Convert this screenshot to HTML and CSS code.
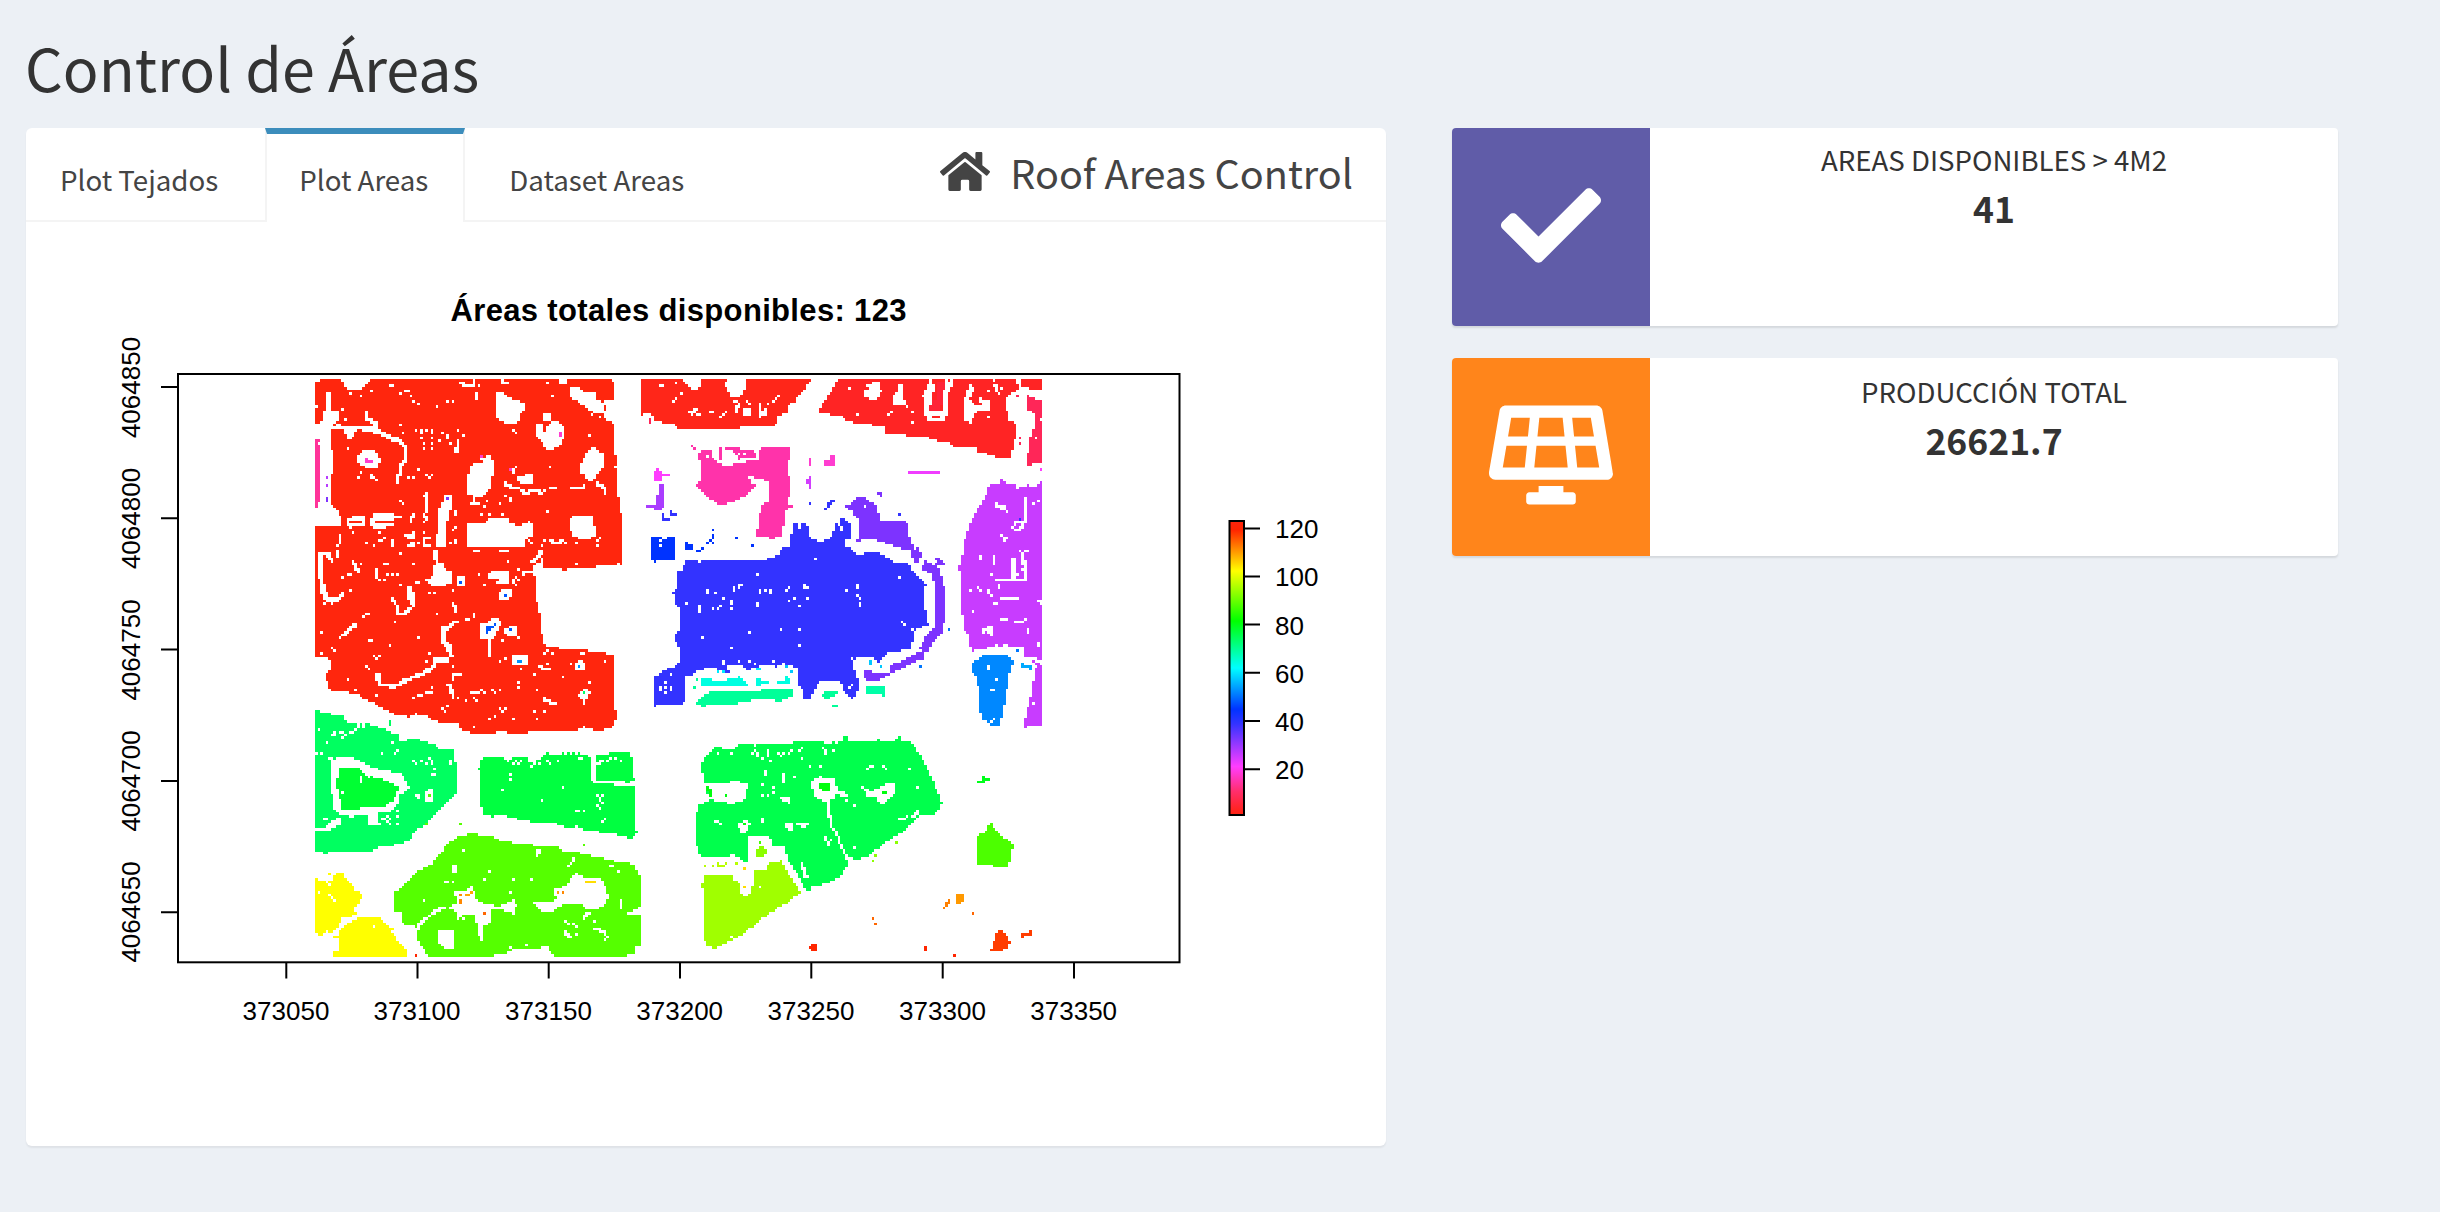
FILE: index.html
```html
<!DOCTYPE html>
<html lang="es">
<head>
<meta charset="utf-8">
<title>Control de Áreas</title>
<link rel="stylesheet" href="styles.css">
</head>
<body>
<h1 class="page-title">Control de Áreas</h1>
<main class="row">
  <section class="tab-box">
    <header class="tab-header">
      <nav class="tabs">
        <a class="tab">Plot Tejados</a>
        <a class="tab tab-active">Plot Areas</a>
        <a class="tab">Dataset Areas</a>
      </nav>
      <div class="box-title">
        <svg class="home-icon" viewBox="0 31 576 450"><path fill="currentColor" d="M280.37 148.26L96 300.11V464a16 16 0 0 0 16 16l112.06-.29a16 16 0 0 0 15.92-16V368a16 16 0 0 1 16-16h64a16 16 0 0 1 16 16v95.64a16 16 0 0 0 16 16.05L464 480a16 16 0 0 0 16-16V300L295.67 148.26a12.19 12.19 0 0 0-15.3 0zM571.6 251.47L488 182.56V44.05a12 12 0 0 0-12-12h-56a12 12 0 0 0-12 12v72.61L318.47 43a48 48 0 0 0-61 0L4.34 251.47a12 12 0 0 0-1.6 16.9l25.5 31A12 12 0 0 0 45.15 301l235.22-193.74a12.19 12.19 0 0 1 15.3 0L530.9 301a12 12 0 0 0 16.9-1.6l25.5-31a12 12 0 0 0-1.7-16.93z"/></svg>
        <span>Roof Areas Control</span>
      </div>
    </header>
    <div class="tab-content">
      <svg class="plot" viewBox="46 242 1320 880">
        <defs>
          <linearGradient id="rainbow" x1="0" y1="1" x2="0" y2="0">
            <stop offset="0" stop-color="#ff2412"/><stop offset=".02" stop-color="#ff2424"/>
            <stop offset=".08" stop-color="#ff2e6b"/><stop offset=".165" stop-color="#ff3dff"/>
            <stop offset=".31" stop-color="#3333ff"/><stop offset=".36" stop-color="#0033ff"/>
            <stop offset=".5" stop-color="#00ffff"/><stop offset=".66" stop-color="#00ff00"/>
            <stop offset=".83" stop-color="#ffff00"/><stop offset=".97" stop-color="#ff2400"/>
            <stop offset="1" stop-color="#ff240d"/>
          </linearGradient>
        </defs>
        <text class="plot-title" x="678.5" y="321" textLength="456">Áreas totales disponibles: 123</text>
        <g id="raster" shape-rendering="crispEdges" transform="translate(315 379) scale(2.626)"></g>
        <rect class="axis" x="178" y="374" width="1001.5" height="588.3"/>
        <path class="axis" d="M178 387h-17M178 518.3h-17M178 649.5h-17M178 781h-17M178 912.3h-17M286.3 962v16.5M417.5 962v16.5M548.7 962v16.5M680 962v16.5M811.3 962v16.5M942.7 962v16.5M1074 962v16.5"/>
        <g class="tick-label">
          <text x="286" y="1020">373050</text><text x="417" y="1020">373100</text><text x="548.5" y="1020">373150</text>
          <text x="679.7" y="1020">373200</text><text x="811" y="1020">373250</text><text x="942.5" y="1020">373300</text><text x="1073.7" y="1020">373350</text>
          <text transform="translate(139.5 387.5) rotate(-90)">4064850</text>
          <text transform="translate(139.5 518.5) rotate(-90)">4064800</text>
          <text transform="translate(139.5 650) rotate(-90)">4064750</text>
          <text transform="translate(139.5 781) rotate(-90)">4064700</text>
          <text transform="translate(139.5 912) rotate(-90)">4064650</text>
        </g>
        <rect class="axis legend-bar" x="1229.5" y="521" width="14.5" height="294"/>
        <path class="axis" d="M1244 528.4h16M1244 576.4h16M1244 624.6h16M1244 672.8h16M1244 721h16M1244 769.2h16"/>
        <g class="legend-label">
          <text x="1275" y="538">120</text><text x="1275" y="586">100</text><text x="1275" y="634.5">80</text>
          <text x="1275" y="682.5">60</text><text x="1275" y="730.7">40</text><text x="1275" y="779">20</text>
        </g>
      </svg>
    </div>
  </section>
  <aside class="info-column">
    <div class="info-box">
      <div class="info-icon purple"><svg class="check-icon" viewBox="0 65 512 382"><path fill="currentColor" d="M173.898 439.404l-166.4-166.4c-9.997-9.997-9.997-26.206 0-36.204l36.203-36.204c9.997-9.998 26.207-9.998 36.204 0L192 312.69 432.095 72.596c9.997-9.997 26.207-9.997 36.204 0l36.203 36.204c9.997 9.997 9.997 26.206 0 36.204l-294.4 294.401c-9.998 9.997-26.207 9.997-36.204-.001z"/></svg></div>
      <div class="info-content"><span class="info-text">Areas disponibles &gt; 4m2</span><strong class="info-number">41</strong></div>
    </div>
    <div class="info-box">
      <div class="info-icon orange"><svg class="solar-icon" viewBox="0 0 640 512"><path fill="currentColor" d="M431.98 448.01l-47.97.05V416h-128v32.21l-47.98.05c-8.82.01-15.97 7.16-15.98 15.99l-.05 31.73c-.01 8.85 7.17 16.03 16.02 16.02l223.96-.26c8.82-.01 15.97-7.16 15.98-15.98l.04-31.73c.01-8.85-7.17-16.03-16.02-16.02zM585.2 26.74C582.58 11.31 568.99 0 553.06 0H86.93C71 0 57.41 11.31 54.79 26.74-3.32 369.16.04 348.08.03 352c-.03 17.32 14.29 32 32.6 32h574.74c18.23 0 32.51-14.56 32.59-31.79.02-4.08 3.35 16.95-54.76-325.47zM259.83 64h120.33l9.77 96H250.06l9.77-96zm-75.17 256H71.09L90.1 208h105.97l-11.41 112zm16.29-160H98.24l16.29-96h96.19l-9.77 96zm32.82 160l11.4-112h149.65l11.4 112H233.77zm195.5-256h96.19l16.29 96H439.04l-9.77-96zm26.06 256l-11.4-112H549.9l19.01 112H455.33z"/></svg></div>
      <div class="info-content accented"><span class="info-text">Producción total</span><strong class="info-number">26621.7</strong></div>
    </div>
  </aside>
</main>
<script src="raster.js"></script>
</body>
</html>
```
FILE: styles.css
```css
* { box-sizing: border-box; }
body {
  margin: 0;
  height: 1212px;
  padding: 34px 26px 0;
  background: #ecf0f5;
  color: #333;
  font-family: "Noto Sans CJK SC", "Noto Sans", sans-serif;
  overflow: hidden;
}
.page-title { margin: 0 0 30px -1px; font-size: 59.2px; line-height: 64px; font-weight: 400; }
.row { display: flex; align-items: flex-start; gap: 66px; }
.tab-box {
  width: 1360px;
  height: 1018px;
  background: #fff;
  border-radius: 6px;
  box-shadow: 0 2px 2px rgba(0, 0, 0, .06);
}
.tab-header {
  display: flex;
  justify-content: space-between;
  height: 94px;
  border-bottom: 2px solid #f4f4f4;
  color: #444;
}
.tabs { display: flex; gap: 10px; height: 94px; }
.tab {
  padding: 25px 35px 0 32px;
  border-top: 6px solid transparent;
  border-left: 2px solid transparent;
  border-right: 2px solid transparent;
  font-size: 27.7px;
  line-height: 40px;
  white-space: nowrap;
}
.tab-active {
  border-color: #3c8dbc #f4f4f4 transparent;
  background: #fff;
}
.box-title {
  display: flex;
  align-items: center;
  gap: 20px;
  height: 88px;
  padding-right: 33px;
  font-size: 39.6px;
  line-height: 86px;
}
.home-icon { width: 50px; height: 39px; margin-top: -1px; }
.tab-content { padding: 20px; }
.plot { display: block; width: 1320px; height: 880px; font-family: "Liberation Sans", Arial, sans-serif; }
.plot-title { font-size: 31px; font-weight: 700; text-anchor: middle; fill: #000; }
.axis { fill: none; stroke: #000; stroke-width: 2; }
.legend-bar { fill: url(#rainbow); }
.tick-label, .legend-label { font-size: 26px; fill: #000; }
.tick-label { text-anchor: middle; }
.info-column { display: flex; flex-direction: column; gap: 32px; width: 886px; }
.info-box {
  display: flex;
  height: 198px;
  overflow: hidden;
  background: #fff;
  border-radius: 4px;
  box-shadow: 0 2px 2px rgba(0, 0, 0, .1);
}
.info-icon { display: flex; align-items: center; justify-content: center; width: 198px; color: #fff; }
.purple { background: #605ca8; }
.orange { background: #ff851b; }
.check-icon { width: 100px; height: 75px; margin-top: -4px; }
.solar-icon { width: 124px; height: 100px; margin-top: -4px; }
.info-content { flex: 1; display: flex; flex-direction: column; align-items: center; padding-top: 11px; }
.accented { padding-top: 13px; }
.info-text { font-size: 27.6px; line-height: 40px; text-transform: uppercase; }
.info-number { font-size: 35.5px; line-height: 58px; }
```
FILE: raster.js
```js
// Roof raster: 277 x 220 cells, each classified with the colour of its area.
const COLS = 277, ROWS = 220, CELL = 2.626;
const cells = new Array(COLS * ROWS).fill(null);
const ctx = document.createElement('canvas').getContext('2d');
let ox = 0, oy = 0;

function origin(x, y) { ox = x; oy = y; }
function parse(points) {
  return points.trim().split(/\s+/).map(p => {
    const [x, y] = p.split(',').map(Number);
    return [(ox + x / 3 - 315) / CELL, (oy + y / 3 - 379) / CELL];
  });
}
function scan(points, pad, hit, color) {
  const xs = points.map(p => p[0]), ys = points.map(p => p[1]);
  const x1 = Math.min(COLS, Math.ceil(Math.max(...xs) + pad)), y1 = Math.min(ROWS, Math.ceil(Math.max(...ys) + pad));
  for (let y = Math.max(0, Math.floor(Math.min(...ys) - pad)); y < y1; y++)
    for (let x = Math.max(0, Math.floor(Math.min(...xs) - pad)); x < x1; x++)
      if (hit(x + .5, y + .5)) cells[y * COLS + x] = color;
}
function trace(points) {
  const path = new Path2D();
  points.forEach((p, i) => i ? path.lineTo(...p) : path.moveTo(...p));
  return path;
}
function fill(color, ...shapes) {
  for (const s of shapes) {
    const pts = parse(s), path = trace(pts);
    path.closePath();
    scan(pts, 0, (x, y) => ctx.isPointInPath(path, x, y), color);
  }
}
function line(color, width, ...shapes) {
  for (const s of shapes) {
    const pts = parse(s), path = trace(pts);
    ctx.lineWidth = width / 3 / CELL;
    scan(pts, 3, (x, y) => ctx.isPointInStroke(path, x, y), color);
  }
}
function dots(color, points) {
  for (const [x, y] of parse(points)) {
    const cx = Math.floor(x), cy = Math.floor(y);
    if (cx >= 0 && cy >= 0 && cx < COLS && cy < ROWS) cells[cy * COLS + cx] = color;
  }
}

const RED = '#ff260d', W = null;

// North-west block, upper half
origin(300, 360);
fill(RED, '45,66 64,66 64,57 125,57 132,80 145,90 185,90 195,75 208,66 210,57 935,57 943,66 943,115 928,120 910,120 918,145 910,175 930,182 945,195 950,410 960,412 960,455 967,460 967,605 45,605');
fill(W,
  '40,190 68,190 68,155 80,150 76,95 90,95 92,150 115,155 115,180 105,190 92,220 92,262 100,270 100,325 92,350 92,430 118,455 125,500 100,500 75,495 40,497',
  '130,205 170,205 155,235 138,235', '170,290 185,272 222,270 242,295 230,328 205,328 175,308',
  '590,95 605,95 615,105 640,120 672,128 672,150 658,170 655,188 632,192 610,186 590,175',
  '808,82 840,82 850,92 888,100 890,118 912,130 908,158 885,160 850,135 820,118 808,110',
  '708,190 730,195 735,215 752,185 778,183 795,205 795,230 780,258 755,268 735,265 725,240 708,228', '730,160 755,160 755,182 730,182',
  '870,265 885,262 890,275 910,278 908,325 890,345 880,362 862,360 858,345 842,340 842,310 858,285',
  '512,315 530,305 550,312 548,290 575,288 580,330 570,385 545,410 525,410 505,400 505,345',
  '645,345 670,350 680,338 698,345 695,372 660,370',
  '505,492 555,490 570,474 628,474 632,492 660,496 685,484 698,488 698,530 680,535 675,570 615,572 600,565 555,578 538,590 510,575 505,560',
  '808,480 820,468 882,468 886,532 840,537 815,525',
  '212,475 225,458 280,458 282,500 225,505 212,495', '140,480 165,465 192,468 192,500 145,503',
  '425,425 455,418 450,460 440,495 435,580 425,605 405,605 405,560 412,520 412,455 425,440', '432,405 455,405 455,425 432,425');
fill(RED, '227,483 282,483 282,492 227,492', '150,484 190,484 190,492 150,492');
line(W, 14, '105,198 140,205 175,203 205,205 250,222 300,245 318,265', '780,62 802,62');
line(W, 10, '318,255 315,300 302,320 300,340 288,368', '197,150 197,178 225,185 228,212', '375,400 380,430 380,455', '475,68 500,76 524,76 524,57', '530,98 528,122', '475,240 470,275', '120,525 122,545 112,560 110,595', '277,535 277,568', '650,380 675,400 700,390 728,400', '890,270 888,290', '855,370 850,385 812,385', '890,370 915,385 917,400', '730,570 730,605', '600,62 625,72', '340,510 340,530 318,528', '320,555 345,552', '390,532 372,535 375,555 390,560', '610,370 640,385', '750,540 770,550 790,540 800,555', '510,430 540,432', '520,410 522,430', '340,462 330,490', '370,460 385,480', '50,580 60,600', '80,590 98,585');
dots(W, '268,77 277,77 214,93 151,100 183,110 300,100 317,95 325,95 330,110 340,124 356,132 411,140 444,124 460,124 537,73 130,148 136,180 145,262 49,139 65,187 300,194 312,217 348,211 364,213 364,222 364,235 380,211 395,211 395,220 395,238 372,250 372,262 395,250 395,265 427,220 443,228 443,235 420,243 451,250 475,211 490,226 640,211 648,218 758,108 740,69 868,226 748,321 356,328 325,352 340,350 380,345 388,352 396,345 175,352 183,337 215,345 215,352 223,352 232,360 300,424 309,432 545,296 640,329 648,320 640,337 740,455 765,385 748,384 758,384 615,408 632,415 630,424 562,424 553,438 600,432 545,463 568,460 608,463 466,455 466,463 283,467 292,467 300,470 372,490 466,505 458,512 466,540 466,548 450,550 370,515 160,518 199,550 222,557 237,518 237,540 246,542 253,533 317,525 356,550 300,582 685,540 692,548 732,545 725,555 830,548 900,530 892,540 892,555 924,565 945,320 877,162 900,168 735,395 325,565 310,565 160,598');
fill('#ff3399', '45,240 62,240 62,430 52,432 52,443 45,443');
dots(W, '60,249');
dots('#ff3dd0', '199,297 199,305 207,305 215,305 545,289 632,328 783,220 783,228');
dots('#b83dff', '80,352 80,376'); dots('#8033ff', '80,415 80,423 443,415');
dots(RED, '325,101');

// North-west block, lower half
origin(300, 550);
fill(RED, '45,-5 967,-5 967,45 920,45 880,52 808,52 800,62 785,62 780,54 735,54 728,25 708,30 695,70 705,85 708,155 716,158 716,188 722,190 722,250 731,255 731,283 745,290 778,295 857,302 918,306 922,315 943,318 943,475 950,480 948,505 943,528 912,540 880,540 855,530 835,533 825,543 683,543 680,551 622,551 618,543 590,543 580,551 512,551 505,543 485,540 478,520 432,518 395,512 375,495 345,490 325,502 310,495 275,490 265,480 232,470 225,457 190,448 185,438 145,428 100,425 84,410 78,375 95,350 92,330 80,318 45,323');
fill(W, '52,20 68,20 70,90 78,120 90,140 105,145 130,120 128,142 100,162 78,155 64,135 62,95 54,80', '118,265 135,260 170,230 170,215 155,222 130,245',
  '322,112 335,112 343,130 343,170 332,168 330,150 320,145', '400,45 425,35 432,55 452,62 456,95 432,108 395,108 390,98 370,95 398,75',
  '545,220 565,218 570,205 600,208 602,228 590,250 572,268 545,265', '598,122 632,118 632,140 618,153 600,145', '612,240 635,228 652,230 650,255 620,264', '635,318 683,315 682,345 660,350 640,345',
  '825,342 840,330 856,342 855,360 830,366', '835,430 855,412 870,425 860,450 840,450', '470,80 492,80 492,108 472,108', '560,70 590,60 630,65 625,100 590,98 600,82 565,82', '715,340 735,355 755,355 750,365 720,362');
line(W, 12, '232,372 240,405 285,408 320,390 370,370 400,350 405,330 445,330', '420,235 440,235 475,210', '430,240 430,280 445,285 450,315 460,320', '447,400 452,420 462,445', '408,0 410,45', '665,72 695,62', '695,40 728,0', '55,15 80,10 100,35');
line(W, 9, '570,265 570,322', '662,350 662,365', '460,155 466,188', '160,30 165,50 176,68', '110,0 110,20', '277,145 290,165 297,190 315,190 333,170', '230,55 232,85', '460,370 460,395', '460,370 480,372', '500,200 503,215', '512,430 540,425 545,418', '745,460 760,460 735,450', '385,122 388,135', '540,5 520,0', '852,450 852,462', '375,430 400,430', '600,5 630,5');
dots(W, '300,12 340,45 348,97 356,97 253,43 262,43 237,90 253,90 262,75 277,75 293,75 300,105 145,75 152,73 184,43 128,82 151,121 199,193 207,193 191,200 285,215 65,247 356,264 205,271 214,271 268,288 96,296 104,302 64,310 222,320 230,328 238,320 199,352 207,358 144,390 230,436 167,421 340,446 356,437 364,437 396,414 522,193 522,200 411,196 404,130 460,121 388,312 380,337 600,334 615,328 460,350 482,372 655,398 655,412 700,373 710,417 710,423 788,382 815,343 868,398 608,270 655,264 537,73 553,105 648,105 640,97 655,90 648,82 655,57 640,90 625,35 830,43 955,43 585,497 568,507 522,532 600,478 608,485 615,478 640,508 700,485 710,508 733,484 735,445 443,470 427,478 435,486 475,445 522,445 500,453 530,452 553,430 577,423 585,425 600,422 733,310 740,303 755,308 845,310 852,310 915,335 740,345 72,160');
dots('#0055ff', '482,97 615,138 561,232 569,232 577,232 561,240 569,240 561,248 585,223 632,240'); dots('#0090ff', '655,333 663,333 837,350'); dots('#00ff66', '852,428');

// North-centre and north-east blocks
origin(630, 360);
fill('#ff2619', '32,57 158,57 170,72 188,88 208,85 218,57 290,57 285,75 292,95 305,112 325,115 340,100 348,80 348,57 545,57 530,75 520,95 498,115 492,128 472,135 470,158 442,170 437,195 350,197 340,205 145,205 135,195 100,190 70,178 65,160 32,165');
fill('#ff2424', '622,57 1160,57 1165,88 1130,110 1128,145 1138,180 1160,190 1158,228 1150,255 1142,293 1105,293 1068,280 1040,275 1035,262 975,260 950,245 905,240 895,230 830,228 825,220 765,220 762,198 728,195 690,193 650,182 635,170 565,158 575,135 600,100', '1175,57 1237,57 1237,90 1215,92 1205,85 1175,83');
fill('#ff2658', '1190,105 1205,115 1237,122 1237,305 1208,308 1205,318 1190,315 1198,240 1208,215 1215,185 1212,158 1190,150');
fill(W, '85,72 103,72 103,80 85,80', '695,95 715,85 700,70 745,68 755,95 735,125 705,108', '788,105 805,95 805,75 820,72 820,110 832,140 790,138', '340,143 360,145 360,165 343,165', '1000,120 1020,75 1035,80 1018,115 1040,140 1080,120 1082,150 1040,155 1020,188 998,180');
line(W, 12, '905,60 888,100 886,150 900,178 935,178 948,150 950,100 968,60');
fill(W, '903,70 915,70 905,130 935,150 940,70 950,60 950,170 900,170 890,150 892,100');
fill('#ff2438', '920,68 945,68 940,95 935,130 930,152 900,150 905,125 920,115');
line(W, 9, '175,155 190,155 205,145', '310,120 325,130 318,160', '388,130 390,170 405,160 405,140', '1048,118 1080,130', '1095,75 1100,95');
dots(W, '136,65 130,124 138,115 153,100 183,162 199,163 207,160 237,158 246,158 270,170 277,163 285,155 332,200 356,130 348,124 400,155 415,134 427,124 435,115 443,108 60,165 658,85 680,165 775,163 783,155 848,155 848,187 880,108 1090,60 1072,90 1115,85 1075,175 1165,65 700,195 1105,100 940,180');
dots('#ff2658', '60,180 60,187 1168,235 1168,250 1160,108'); dots(W, '1218,234 1232,180');
const PINK = '#ff33aa', VIO = '#c83cff', PUR = '#7d33ff', BLUE = '#3333ff';
fill(PINK, '205,275 240,270 250,300 290,318 330,308 385,300 385,275 400,260 480,258 480,300 473,305 473,345 480,350 480,400 470,430 490,435 465,455 458,528 425,535 380,528 386,465 400,435 418,420 418,365 380,355 355,350 365,370 380,375 350,405 320,420 290,433 262,432 220,400 212,385 198,382 198,370 212,365 214,310 205,300');
line(PINK, 9, '183,258 200,266', '280,268 370,272 360,290', '310,270 330,300', '330,285 375,285', '275,265 270,300');
dots(W, '260,288 229,290 268,298 300,285 340,280 348,300 317,290');
fill('#ff3dd0', '595,287 615,287 615,316 585,316 585,305 598,300', '536,295 545,295 545,316 536,316');
fill('#ff3dff', '70,334 82,325 97,338 117,345 97,350 97,365 70,365'); line('#f03dff', 9, '836,337 930,337'); dots('#ff3dff', '1232,328');
fill('#aa3dff', '88,373 102,373 102,440 90,455 68,450 68,442 48,442 48,434 78,432 80,405 88,400');
fill('#d23dff', '536,350 545,350 548,375 540,385 530,365');
fill(VIO, '1080,368 1110,375 1115,358 1125,370 1160,375 1160,388 1190,375 1220,380 1237,358 1237,605 995,605 1000,550 1020,495 1042,450 1065,410');
line(BLUE, 9, '100,460 100,478 115,478', '120,458 140,465', '585,450 600,430 612,422'); dots(BLUE, '540,435 808,465');
fill(PUR, '645,440 670,425 685,412 710,412 715,425 742,435 748,480 830,485 838,530 850,560 870,605 850,605 842,570 820,568 770,552 730,538 680,543 687,530 685,480 668,455', '735,397 756,397 756,410 742,405'); dots(W, '708,436');
fill(BLUE, '430,600 450,582 480,560 482,520 490,515 490,487 520,487 535,500 535,530 568,548 605,530 612,515 615,487 625,500 635,475 648,475 660,495 660,535 645,545 655,575 680,582 725,580 740,572 780,600 780,605 430,605'); dots(W, '505,495 505,503 525,582 632,505 632,513');
fill('#0033ff', '65,532 133,532 133,598 65,598', '168,548 188,555 185,570 168,565'); dots('#0033ff', '199,572 207,570 214,566 246,512 246,526 246,535 246,548 237,545 232,548 320,535 366,558'); dots(W, '88,557 88,542 97,535 105,535');
line(W, 9, '1097,435 1120,440 1118,455', '1187,410 1187,480 1170,510 1150,510', '1185,485 1160,485 1140,510', '1110,525 1120,530 1120,542', '1180,568 1220,590'); dots(W, '1208,433 1224,425 1128,535 1130,452'); dots(BLUE, '1168,478');

// Centre and east blocks
origin(630, 550);
fill('#0033ff', '65,-5 133,-5 133,28 80,28 78,38 70,38 65,20'); dots('#0033ff', '199,3');
fill(BLUE, '455,-5 660,-5 680,14 720,14 735,5 765,18 790,35 835,38 848,65 870,88 887,105 883,150 890,215 900,225 870,232 850,245 845,300 800,303 770,312 762,325 740,338 730,318 680,325 670,335 675,365 685,395 680,435 665,450 640,425 640,402 610,390 570,395 550,425 545,450 522,450 520,425 505,400 505,355 480,345 440,350 400,345 350,362 340,345 290,350 300,368 270,365 255,350 210,360 180,377 168,378 168,455 155,465 78,465 78,473 70,473 70,378 85,378 110,355 143,347 150,318 143,275 133,270 135,250 149,240 149,175 133,160 130,128 143,110 143,65 160,55 168,32 210,35 250,27 360,27 400,30 445,15');
fill(W, '570,400 600,392 630,398 636,420 622,420 600,410 570,425 555,420', '325,105 340,102 335,112 322,118');
dots(W, '383,73 808,80 555,25 525,105 525,112 533,112 232,121 232,130 253,130 310,112 310,121 282,146 270,170 262,177 246,177 168,160 207,170 207,177 207,185 302,154 302,162 302,177 380,160 380,170 390,121 390,130 405,121 420,121 420,132 468,121 480,117 475,152 490,146 533,145 508,170 650,121 683,105 683,112 683,138 690,146 690,162 690,170 815,216 823,224 848,240 450,240 508,240 358,247 217,264 302,294 508,288 280,337 280,343 325,333 356,337 372,343 427,337 465,340 105,396 88,412 88,420 105,412 122,412 122,420 105,428 122,372 655,412 665,405 668,325');
line(PUR, 28, '850,0 865,25', '878,45 905,58', '905,45 925,90 930,130 930,200 925,240 895,270 880,305');
fill(PUR, '915,25 932,25 945,45 925,48', '885,300 885,325 840,343 790,370 770,380 740,392 712,392 700,375 700,358 722,358 722,372 755,370 780,365 782,345 830,325');
fill(VIO, '998,-5 1237,-5 1237,328 1185,322 1182,295 1130,285 1025,303 1018,285 1018,262 1002,240 995,180 993,70 985,50 995,45', '1237,350 1237,528 1190,528 1185,537 1185,505 1205,430 1212,380 1218,350 1205,330 1225,340');
line(W, 9, '1172,0 1180,20 1185,60 1185,90 1097,90', '1060,240 1080,235 1080,250', '1110,205 1135,208', '1150,215 1185,218', '1110,145 1165,145', '1185,0 1195,8', '1150,25 1150,85', '1218,145 1237,160', '1062,245 1062,255', '1090,18 1093,45');
dots(W, '1050,30 1050,22 1027,185 1077,120 1077,130 1085,140 1090,160 1098,158 1043,117 1050,120 1020,125 1105,105 1105,112 1192,240 1192,250 1080,258 1175,60 1165,70 1105,430 1100,288 1226,280 1226,290 1208,457 1175,40 1085,73 1185,205 1118,210 990,120');
fill('#0088ff', '1025,340 1060,318 1120,315 1128,307 1140,325 1150,330 1142,362 1135,380 1128,440 1118,490 1110,527 1085,525 1075,515 1058,512 1050,480 1048,435 1040,380 1025,368'); dots(W, '1077,350 1077,358 1100,390 1085,420 1092,420 1090,508 1085,518');
line('#00aaff', 9, '1172,335 1178,345 1205,355'); dots('#0077ff', '957,240 1160,302 870,350'); dots('#00c8ff', '722,335 722,342 755,350 750,350 468,352 483,368'); dots('#00eaff', '262,366 277,366 383,358 390,358');
fill('#00ffe1', '215,388 270,390 320,388 327,378 345,395 353,405 300,405 215,410', '380,385 400,392 465,392 465,380 480,382 480,400 430,396 400,398 388,410 380,408');
fill('#00ff99', '197,458 220,435 245,427 375,425 400,418 485,420 487,438 455,453 375,450 322,458 320,465 230,463 222,473 205,463', '575,435 600,420 620,428 615,438 590,448'); dots('#00ff99', '199,390 194,415 610,468 617,468'); fill('#00ffa8', '710,412 740,408 763,412 763,440 740,430 710,430');

// South-west blocks
origin(300, 700);
const TEAL = '#00ff60', GREEN = '#00ff33', LIME = '#55ff00', YEL = '#ffff00';
fill(TEAL, '45,25 52,33 82,35 90,42 128,45 132,62 175,75 190,68 235,80 265,92 295,105 300,122 350,118 370,125 408,135 415,145 465,152 470,282 445,300 420,325 395,355 365,380 340,400 325,425 300,432 225,445 218,455 85,457 80,463 68,457 45,456');
fill(W, '92,180 130,168 165,175 200,195 240,208 300,220 318,240 328,265 300,285 298,310 270,335 210,345 150,350 110,340 100,325 100,285 92,280', '205,345 235,345 230,380 205,380', '372,272 400,268 400,305 375,302', '345,280 362,285 355,303', '45,382 75,382 100,360 125,350 125,378 90,382 88,392 45,390');
fill(GREEN, '118,198 125,205 175,205 195,222 240,235 297,262 290,280 280,300 255,322 180,322 170,330 125,325 118,285 108,255 108,235 118,230');
dots(W, '57,90 80,128 104,98 104,108 96,103 120,97 128,97 136,104 128,112 175,82 191,82 191,75 168,92 160,100 150,100 277,130 246,160 285,160 292,152 100,175 88,172 340,185 348,191 364,185 380,195 388,172 395,180 395,188 404,210 404,220 395,222 450,182 450,190 183,238 183,247 183,230 128,278 72,357 80,357 238,375 246,360 253,353 262,350 262,365 270,370 270,360 295,335 295,350 295,375 49,158 64,158 207,230 222,230');
dots(TEAL, '268,66 268,74'); dots(LIME, '388,287 380,373 482,373 852,436');
fill('#00ff40', '545,180 555,170 605,170 620,185 640,175 685,175 700,190 715,180 740,160 775,165 862,160 868,165 872,240 882,250 1000,258 1007,260 1007,375 1012,400 990,415 970,405 915,402 870,390 845,388 830,380 800,382 765,372 690,365 660,358 635,350 590,345 580,350 550,340 543,310 543,215 534,208 543,200', '888,160 930,160 938,152 990,158 998,180 998,230 1005,240 985,250 965,242 890,240 888,215');
dots('#00ff40', '740,158 790,160 806,160 820,158 835,158');
dots(W, '625,185 640,190 650,185 655,195 660,185 685,182 695,200 700,190 705,185 720,195 740,180 752,190 775,183 835,172 845,172 632,240 632,222 608,270 790,262 725,300 828,335 836,335 850,335 888,190 896,180 905,183 896,192 920,183 930,172 950,175 960,180 888,282 896,290 905,285 896,300 888,318 896,325 905,310 915,358 908,365');
fill(LIME, '282,580 305,560 335,535 355,512 395,492 420,460 445,430 485,405 530,402 540,412 570,408 600,423 690,435 770,440 800,458 840,458 880,468 930,480 1000,492 1012,518 1022,525 1020,620 990,640 1022,645 1020,735 1008,740 1005,765 910,770 760,770 745,742 650,745 610,762 550,770 385,770 365,740 348,700 365,680 345,680 310,675 305,640 282,635');
fill(W, '415,693 462,695 462,745 420,742', '465,570 500,570 515,560 528,580 530,600 560,615 600,618 640,600 650,615 643,642 610,632 570,625 570,670 545,675 548,720 540,720 530,670 525,640 495,645 470,655 465,630 445,625 468,610', '760,570 800,555 825,520 850,530 905,538 920,570 928,590 910,620 870,632 845,615 800,608 760,632 725,640 700,605 745,605 770,598', '455,496 468,496 468,518 455,518', '710,448 722,448 715,478 708,470');
line(W, 9, '350,680 380,655 410,630 440,625', '825,475 805,500', '960,595 962,630', '850,655 870,635', '885,685 915,700 925,715', '795,695 815,715', '980,645 1010,635');
dots(W, '372,602 435,547 443,547 460,547 490,455 568,514 632,577 553,538 638,538 695,540 625,423 632,743 680,735 800,665 808,670 820,672 830,678 828,700 915,720 885,660 955,512 940,495 930,500 790,558 475,655 490,655 365,672');
dots('#ff8800', '482,585 482,600 482,608 790,577'); dots('#ffa500', '498,587 506,587 513,577 775,577'); dots('#ff6600', '553,642'); line('#ffdd00', 8, '858,547 885,547');
fill(YEL, '45,535 65,545 95,540 110,520 130,520 135,532 150,545 165,568 187,588 178,610 165,625 168,640 175,655 215,655 225,648 250,660 265,680 280,700 295,725 315,745 325,770 95,770 105,765 95,760 118,750 118,710 95,715 105,700 80,695 65,707 45,702');
line(W, 14, '105,705 120,680 145,660 168,650', '125,660 170,655'); dots(W, '57,577 96,592 104,598 88,585 222,678 112,690 72,705 80,548 88,552'); dots(YEL, '88,525 277,685 60,545'); dots('#ff2600', '348,768');

// South-centre block and scattered small areas
origin(640, 700);
const MINT = '#00ff4c';
fill(MINT, '185,195 195,175 215,150 230,135 245,145 280,150 295,132 335,135 365,128 390,135 440,132 485,122 530,128 550,122 560,135 590,125 608,122 612,108 625,110 625,122 690,125 710,120 760,122 780,110 785,122 815,128 840,165 858,200 878,240 892,275 907,310 885,343 840,345 805,385 770,405 730,430 690,465 645,480 625,475 622,500 600,530 555,552 520,558 510,572 495,570 470,520 445,480 430,460 435,435 395,440 390,405 325,405 328,487 315,485 285,465 188,475 178,460 167,430 167,345 178,315 210,300 190,248');
fill(W, '190,252 265,250 280,238 305,248 328,255 315,270 318,300 290,308 270,312 240,305 205,298 205,275', '515,240 540,230 585,238 592,270 580,300 550,305 520,285', '655,245 690,275 720,262 750,248 768,255 765,280 740,300 725,320 705,290 680,285', '292,375 320,360 330,370 322,395 310,403 300,390', '437,370 458,370 458,395 440,395', '775,355 805,345 800,358 778,362', '815,345 830,330 840,335 835,345 818,360', '418,292 450,290 448,312 435,305');
line(W, 9, '565,300 568,340 575,380 590,400 600,430 620,470 640,480', '432,220 432,252', '550,140 560,165', '592,280 625,285', '465,375 495,375 485,385', '485,490 500,535', '555,410 565,430 575,415', '225,360 250,378', '440,480 430,455');
dots(W, '232,158 277,160 340,160 350,165 345,153 356,158 365,175 385,152 385,160 385,170 395,183 425,170 418,158 435,160 445,158 458,148 475,148 485,145 490,175 508,200 540,198 580,152 590,130 575,130 683,208 690,200 698,200 735,208 728,200 808,208 832,262 375,215 375,225 370,258 400,262 385,285 370,285 400,278 345,137 645,318 370,360 370,368 485,377 640,440 462,232 620,300 610,275');
fill('#00ff0d', '538,250 570,250 568,268 555,277 540,268', '200,260 213,268 213,290 205,290'); dots('#00ff0d', '257,287 730,278 738,278 312,374'); line('#00ff1a', 9, '1010,245 1048,240'); dots('#00ff1a', '1030,234'); dots('#44ff00', '360,428');
fill('#4cff00', '1008,410 1030,400 1045,380 1053,370 1065,385 1085,405 1120,435 1112,465 1105,503 1060,503 1050,495 1008,495');
fill('#8cff00', '350,445 362,440 378,445 380,460 370,470 352,468');
fill('#a0ff00', '190,528 280,530 300,550 303,580 320,590 335,580 340,512 375,510 390,490 425,480 440,510 460,545 482,577 460,595 430,615 380,645 340,678 290,715 235,740 218,746 200,735 190,715 188,665 190,575 185,560'); dots(W, '285,538 360,562 270,712');
dots('#b8ff00', '194,497 220,497 235,492 243,497 251,497 259,492 235,499 290,490'); dots('#ffdd00', '312,507 312,562'); dots('#8cff00', '770,428 707,468 699,484');
fill('#ff9900', '945,583 970,583 968,600 958,610 945,613'); line('#ff8000', 9, '926,598 922,615 908,625'); dots('#ff6600', '1000,642 699,657 707,673');
fill('#ff3d00', '1072,693 1090,693 1100,705 1112,727 1100,745 1078,755 1052,755 1060,728'); line('#ff3d00', 9, '1145,713 1150,705 1172,705 1172,693');
fill('#ff2600', '515,732 530,732 530,755 515,750'); dots('#ff2600', '510,743 856,744 856,752 942,768');

// Merge the cells of a row into runs and draw one path per colour.
const paths = {};
for (let y = 0; y < ROWS; y++) {
  for (let x = 0; x < COLS;) {
    const c = cells[y * COLS + x];
    let end = x + 1;
    while (end < COLS && cells[y * COLS + end] === c) end++;
    if (c) paths[c] = (paths[c] || '') + `M${x} ${y}h${end - x}v1h${x - end}z`;
    x = end;
  }
}
for (const [color, d] of Object.entries(paths)) {
  const p = document.createElementNS('http://www.w3.org/2000/svg', 'path');
  p.setAttribute('fill', color);
  p.setAttribute('d', d);
  document.getElementById('raster').append(p);
}
```
